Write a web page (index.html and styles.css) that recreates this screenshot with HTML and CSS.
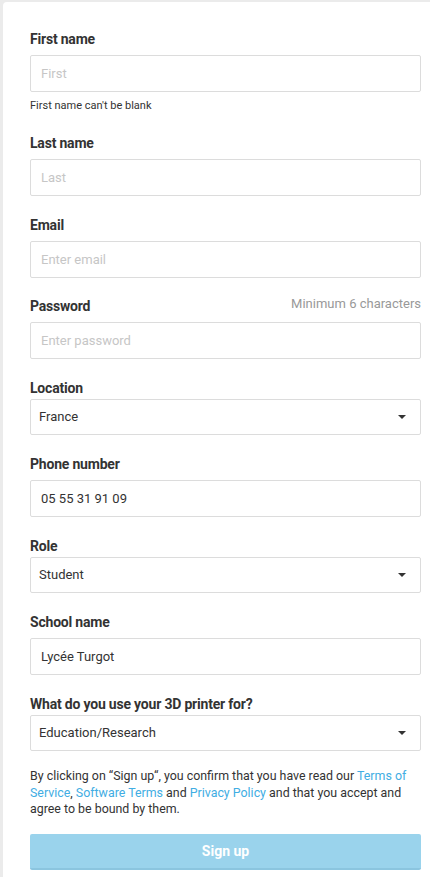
FILE: index.html
```html
<!DOCTYPE html>
<html lang="en">
<head>
<meta charset="utf-8">
<title>Sign up</title>
<link rel="stylesheet" href="styles.css">
</head>
<body>
<div class="page">
  <form class="card">
    <div class="field field-error">
      <label class="label">First name</label>
      <input class="input" type="text" placeholder="First">
      <div class="error">First name can't be blank</div>
    </div>
    <div class="field">
      <label class="label">Last name</label>
      <input class="input" type="text" placeholder="Last">
    </div>
    <div class="field">
      <label class="label">Email</label>
      <input class="input" type="text" placeholder="Enter email">
    </div>
    <div class="field">
      <div class="label-row">
        <label class="label">Password</label>
        <span class="hint">Minimum 6 characters</span>
      </div>
      <input class="input" type="password" placeholder="Enter password">
    </div>
    <div class="field field-select">
      <label class="label">Location</label>
      <div class="select-wrap">
        <select class="select"><option>France</option></select>
        <span class="caret"></span>
      </div>
    </div>
    <div class="field">
      <label class="label">Phone number</label>
      <input class="input" type="text" value="05 55 31 91 09">
    </div>
    <div class="field field-select">
      <label class="label">Role</label>
      <div class="select-wrap">
        <select class="select"><option>Student</option></select>
        <span class="caret"></span>
      </div>
    </div>
    <div class="field">
      <label class="label">School name</label>
      <input class="input" type="text" value="Lycée Turgot">
    </div>
    <div class="field field-select field-last">
      <label class="label">What do you use your 3D printer for?</label>
      <div class="select-wrap">
        <select class="select"><option>Education/Research</option></select>
        <span class="caret"></span>
      </div>
    </div>
    <p class="terms">By clicking on “Sign up“, you confirm that you have read our <a href="#">Terms of Service</a>, <a href="#">Software Terms</a> and <a href="#">Privacy Policy</a> and that you accept and agree to be bound by them.</p>
    <button class="btn" type="button">Sign up</button>
  </form>
</div>
</body>
</html>
```

FILE: styles.css
```css
* { box-sizing: border-box; }
html, body {
  margin: 0;
  padding: 0;
  background: #ebebeb;
  overflow: hidden;
}
body {
  font-family: Roboto, "Open Sans", "Liberation Sans", sans-serif;
  color: #333;
}
.page {
  padding: 2px 0 0 3px;
  width: 430px;
  height: 877px;
  overflow: hidden;
}
.card {
  background: #fff;
  border-top-left-radius: 4px;
  width: 445px;
  min-height: 900px;
  padding: 27px 27px 0 27px;
  display: flex;
  flex-direction: column;
}
.card > * { width: 391px; }
.field {
  display: flex;
  flex-direction: column;
  margin-bottom: 18.5px;
}
.field-error { margin-bottom: 20px; }
.field-select { margin-bottom: 19.5px; }
.field-last { margin-bottom: 17.5px; }
.label {
  font-size: 14px;
  font-weight: 700;
  line-height: 20px;
  letter-spacing: -0.2px;
  color: #333;
  margin-bottom: 6px;
}
.field-select .label { margin-bottom: 1px; }
.label-row {
  display: flex;
  justify-content: space-between;
  align-items: flex-start;
}
.hint {
  font-size: 13px;
  line-height: 16px;
  color: #999;
}
.input {
  height: 37px;
  border: 1px solid #dcdcdc;
  border-radius: 2px;
  padding: 0 10px;
  font-family: inherit;
  font-size: 13px;
  color: #333;
  outline: none;
  background: #fff;
}
.input::placeholder { color: #c6c6c6; }
.error {
  font-size: 11px;
  line-height: 15px;
  margin-top: 6px;
  color: #333;
}
.select-wrap { position: relative; }
.select {
  -webkit-appearance: none;
  appearance: none;
  width: 100%;
  height: 36px;
  border: 1px solid #dcdcdc;
  border-radius: 2px;
  padding: 0 30px 0 8px;
  font-family: inherit;
  font-size: 13px;
  color: #333;
  background: #fff;
  outline: none;
}
.caret {
  position: absolute;
  right: 15px;
  top: 16px;
  width: 0;
  height: 0;
  border-left: 4px solid transparent;
  border-right: 4px solid transparent;
  border-top: 4px solid #333;
  pointer-events: none;
}
.terms {
  margin: 0 0 16px;
  font-size: 12.4px;
  line-height: 16.5px;
  color: #333;
}
.terms a {
  color: #41ade3;
  text-decoration: none;
}
.btn {
  height: 36px;
  border: none;
  border-bottom: 2px solid #8bc5df;
  border-radius: 2px;
  background: #9ad3ec;
  color: #fff;
  font-family: inherit;
  font-size: 14px;
  font-weight: 700;
  padding: 0;
}
```
